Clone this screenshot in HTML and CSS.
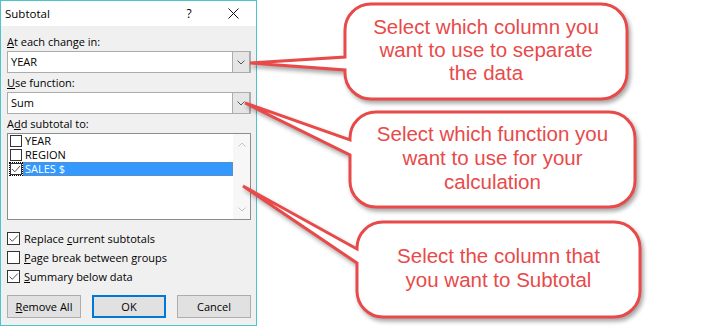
FILE: index.html
```html
<!DOCTYPE html>
<html>
<head>
<meta charset="utf-8">
<link rel="stylesheet" href="styles.css">
</head>
<body>
<div class="page">
  <div class="dialog">
    <div class="titlebar">
      <span class="title">Subtotal</span>
      <span class="help">?</span>
      <svg class="close" width="11" height="11" viewBox="0 0 11 11"><path d="M0.5 0.5 L10.5 10.5 M10.5 0.5 L0.5 10.5" stroke="#111" stroke-width="1" fill="none"/></svg>
    </div>
    <div class="body">
      <div class="label"><u>A</u>t each change in:</div>
      <div class="combo">
        <span class="combo-text">YEAR</span>
        <span class="combo-btn"><svg width="8" height="5" viewBox="0 0 8 5"><path d="M0.5 0.5 L4 4 L7.5 0.5" stroke="#555" stroke-width="1" fill="none"/></svg></span>
      </div>
      <div class="label"><u>U</u>se function:</div>
      <div class="combo">
        <span class="combo-text">Sum</span>
        <span class="combo-btn"><svg width="8" height="5" viewBox="0 0 8 5"><path d="M0.5 0.5 L4 4 L7.5 0.5" stroke="#555" stroke-width="1" fill="none"/></svg></span>
      </div>
      <div class="label">A<u>d</u>d subtotal to:</div>
      <div class="listbox">
        <div class="list-items">
          <div class="item"><span class="cb-small"></span><span class="item-text">YEAR</span></div>
          <div class="item"><span class="cb-small"></span><span class="item-text">REGION</span></div>
          <div class="item"><span class="cb-small focus"><svg width="10" height="10" viewBox="0 0 10 10"><path d="M1 5 L3.8 7.8 L9 2" stroke="#555" stroke-width="1" fill="none"/></svg></span><span class="item-text selected">SALES $</span></div>
        </div>
        <div class="scrollbar">
          <svg width="8" height="5" viewBox="0 0 8 5"><path d="M0.5 4.5 L4 1 L7.5 4.5" stroke="#c4c4c4" stroke-width="1" fill="none"/></svg>
          <svg width="8" height="5" viewBox="0 0 8 5"><path d="M0.5 0.5 L4 4 L7.5 0.5" stroke="#c4c4c4" stroke-width="1" fill="none"/></svg>
        </div>
      </div>
      <div class="options">
        <div class="opt"><span class="cb"><svg width="11" height="11" viewBox="0 0 11 11"><path d="M1.5 5.5 L4.3 8.3 L9.8 2.5" stroke="#555" stroke-width="1" fill="none"/></svg></span><span>Replace <u>c</u>urrent subtotals</span></div>
        <div class="opt"><span class="cb"></span><span><u>P</u>age break between groups</span></div>
        <div class="opt"><span class="cb"><svg width="11" height="11" viewBox="0 0 11 11"><path d="M1.5 5.5 L4.3 8.3 L9.8 2.5" stroke="#555" stroke-width="1" fill="none"/></svg></span><span><u>S</u>ummary below data</span></div>
      </div>
      <div class="buttons">
        <div class="btn"><u>R</u>emove All</div>
        <div class="btn default">OK</div>
        <div class="btn">Cancel</div>
      </div>
    </div>
  </div>

  <svg class="callouts" width="706" height="327" viewBox="0 0 706 327">
    <path class="bubble" d="M371,4 H601 A26 26 0 0 1 627,30 V73 A26 26 0 0 1 601,99 H371 A26 26 0 0 1 345,73 V70 L250,63 L345,57 V30 A26 26 0 0 1 371,4 Z"/>
    <path class="bubble" d="M376,112 H609 A26 26 0 0 1 635,138 V181 A26 26 0 0 1 609,207 H376 A26 26 0 0 1 350,181 V155 L245,103 L350,140 V138 A26 26 0 0 1 376,112 Z"/>
    <path class="bubble" d="M383,222 H614 A26 26 0 0 1 640,248 V291 A26 26 0 0 1 614,317 H383 A26 26 0 0 1 357,291 V263 L243,186 L357,249 V248 A26 26 0 0 1 383,222 Z"/>
  </svg>
  <div class="callout-text c1">Select which column you<br>want to use to separate<br>the data</div>
  <div class="callout-text c2">Select which function you<br>want to use for your<br>calculation</div>
  <div class="callout-text c3">Select the column that<br>you want to Subtotal</div>
</div>
</body>
</html>
```

FILE: styles.css
```css
html, body {
  margin: 0;
  padding: 0;
  background: #ffffff;
}
body {
  font-family: "Open Sans", "Noto Sans", sans-serif;
  font-size: 11px;
  color: #000;
}
.page {
  position: relative;
  width: 706px;
  height: 327px;
  overflow: hidden;
}
.dialog {
  width: 257px;
  height: 326px;
  box-sizing: border-box;
  border: 1px solid #4cc4ca;
  background: #f0f0f0;
  display: flex;
  flex-direction: column;
}
.titlebar {
  height: 25px;
  flex: none;
  background: #ffffff;
  display: flex;
  align-items: center;
  padding: 0 17px 0 4px;
}
.title {
  flex: 1;
  font-size: 11.5px;
  color: #000;
}
.help {
  width: 10px;
  text-align: center;
  font-size: 12px;
  margin-right: 34px;
}
.close {
  display: block;
}
.body {
  padding: 8px 5px 0 6px;
  display: flex;
  flex-direction: column;
}
.label {
  height: 16px;
  line-height: 16px;
}
.combo {
  height: 22px;
  margin-top: 1px;
  margin-bottom: 2px;
  box-sizing: border-box;
  border: 1px solid #acacac;
  background: #ffffff;
  display: flex;
  align-items: center;
}
.combo-text {
  flex: 1;
  padding-left: 3px;
  line-height: 20px;
}
.combo-btn {
  width: 18px;
  height: 22px;
  margin: -1px 0 -1px 0;
  box-sizing: border-box;
  border: 1px solid #acacac;
  background: #e5e5e5;
  display: flex;
  align-items: center;
  justify-content: center;
}
.combo-btn svg { display: block; }
.listbox {
  height: 87px;
  margin-top: 1px;
  box-sizing: border-box;
  border: 1px solid #8c8c8c;
  background: #ffffff;
  display: flex;
}
.list-items {
  flex: 1;
  display: flex;
  flex-direction: column;
}
.item {
  height: 14px;
  display: flex;
  align-items: center;
}
.cb-small {
  width: 12px;
  height: 12px;
  box-sizing: border-box;
  border: 1px solid #333;
  background: #fff;
  margin-left: 2px;
  display: flex;
  align-items: center;
  justify-content: center;
}
.cb-small.focus {
  outline: 1px dotted #000;
  outline-offset: 0;
}
.item-text {
  flex: 1;
  height: 14px;
  line-height: 14px;
  margin-left: 1px;
  padding-left: 2px;
}
.item-text.selected {
  background: #3399ff;
  color: #ffffff;
  box-sizing: border-box;
  border: 1px dotted rgba(190, 120, 60, 0.55);
  line-height: 12px;
  padding-left: 1px;
}
.scrollbar {
  width: 17px;
  background: #f7f7f7;
  display: flex;
  flex-direction: column;
  align-items: center;
  justify-content: space-between;
  padding: 8px 0 7px 0;
  box-sizing: border-box;
}
.scrollbar svg { display: block; }
.options {
  margin-top: 9px;
  display: flex;
  flex-direction: column;
}
.opt {
  height: 19px;
  display: flex;
  align-items: center;
}
.cb {
  width: 13px;
  height: 13px;
  box-sizing: border-box;
  border: 1px solid #333;
  background: #fff;
  margin-right: 4px;
  display: flex;
  align-items: center;
  justify-content: center;
}
.cb svg { display: block; }
.buttons {
  margin-top: 9px;
  display: flex;
  justify-content: space-between;
}
.btn {
  width: 74px;
  height: 23px;
  box-sizing: border-box;
  border: 1px solid #adadad;
  background: #e1e1e1;
  display: flex;
  align-items: center;
  justify-content: center;
}
.btn.default {
  border: 2px solid #0078d7;
}
.callouts {
  position: absolute;
  left: 0;
  top: 0;
  pointer-events: none;
}
.bubble {
  fill: #ffffff;
  stroke: #e84a4a;
  stroke-width: 3;
  stroke-linejoin: miter;
  filter: drop-shadow(2px 3px 2px rgba(0, 0, 0, 0.35));
}
.callout-text {
  position: absolute;
  display: flex;
  align-items: center;
  justify-content: center;
  text-align: center;
  font-family: "Liberation Sans", Arial, sans-serif;
  font-size: 20.5px;
  line-height: 24px;
  color: #e84a4a;
}
.c1 { left: 345px; top: 2px; width: 282px; height: 95px; line-height: 23px; }
.c2 { left: 350px; top: 110px; width: 285px; height: 95px; }
.c3 { left: 357px; top: 220px; width: 283px; height: 95px; }
```
